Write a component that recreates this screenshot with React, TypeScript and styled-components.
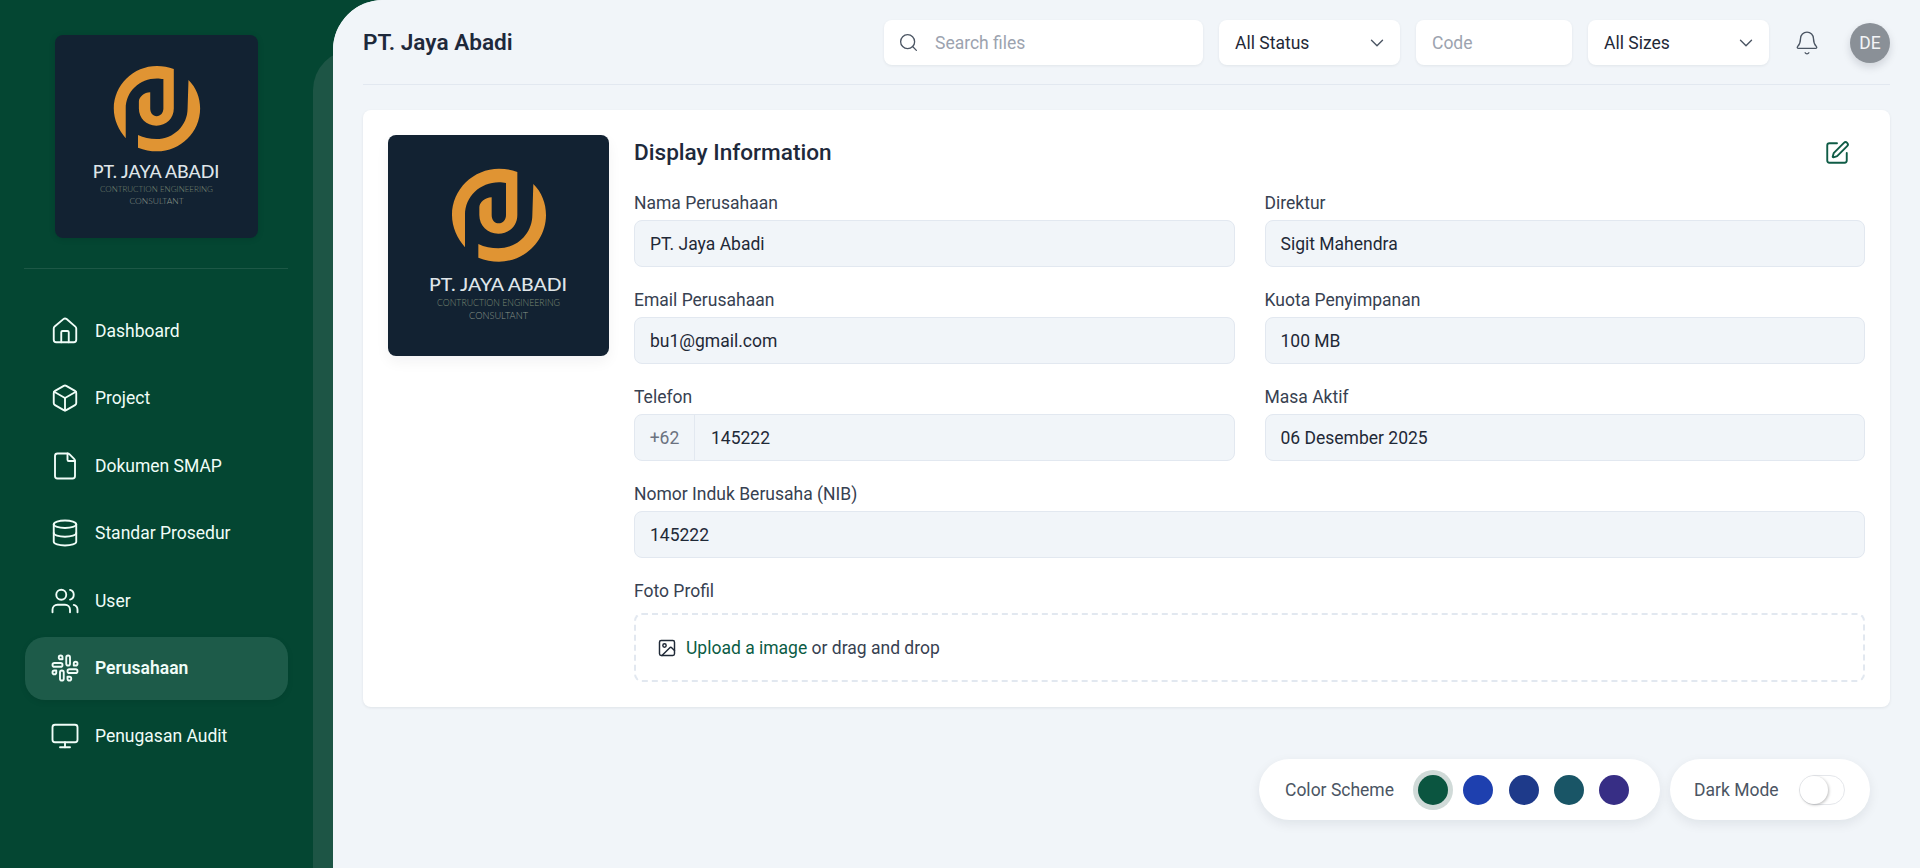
import React from "react";
import styled, { createGlobalStyle } from "styled-components";
import { Bell, Box, ChevronDown, Database, File, House, Image as ImageIcon, Monitor, Search, Slack, SquarePen, Users } from "lucide-react";

const Global = createGlobalStyle`
  html, body { margin: 0; padding: 0; height: 100%; overflow: hidden; background: #f1f5f9; }
  body { font-family: Roboto, "Liberation Sans", sans-serif; }
  * { box-sizing: border-box; }
`;

const Page = styled.div`
  display: flex;
  height: 868px;
  background: #044632;
`;

const Sidebar = styled.aside`
  width: 333px;
  flex: none;
  padding: 35px 45px 0 25px;
  display: flex;
  flex-direction: column;
`;

const LogoTile = styled.div`
  width: 203px;
  height: 203px;
  margin-left: 30px;
  border-radius: 8px;
  overflow: hidden;
  box-shadow: 0 1px 6px rgba(0, 0, 0, 0.12);
  svg { display: block; width: 100%; height: 100%; }
`;

const SideRule = styled.hr`
  width: 264px;
  height: 1px;
  border: 0;
  margin: 30px 0 30px -1px;
  background: rgba(255, 255, 255, 0.1);
`;

const Nav = styled.nav`
  display: flex;
  flex-direction: column;
  gap: 4.6px;
`;

const NavItem = styled.a<{ $active?: boolean }>`
  display: flex;
  align-items: center;
  gap: 15px;
  height: 63px;
  padding-left: 25px;
  border-radius: 20px;
  color: #f0fdf8;
  font-size: 17.5px;
  font-weight: ${(p) => (p.$active ? 600 : 400)};
  background: ${(p) => (p.$active ? "#1d5b49" : "transparent")};
  box-shadow: ${(p) => (p.$active ? "0 2px 6px rgba(0,0,0,0.08)" : "none")};
  svg { flex: none; }
`;

const Main = styled.main`
  position: relative;
  flex: 1;
  min-width: 0;
  padding: 0 30px;
  background: #f1f5f9;
  border-top-left-radius: 50px;
  &::before {
    content: "";
    position: absolute;
    left: -20px;
    top: 50px;
    bottom: 0;
    width: 70px;
    background: #1d5545;
    border-top-left-radius: 40px;
    z-index: 0;
  }
  &::after {
    content: "";
    position: absolute;
    inset: 0;
    background: #f1f5f9;
    border-top-left-radius: 50px;
    z-index: 0;
  }
  > * { position: relative; z-index: 1; }
`;

const Header = styled.header`
  height: 85px;
  display: flex;
  align-items: center;
  border-bottom: 1px solid #e2e8f0;
`;

const PageTitle = styled.h1`
  margin: 0;
  font-size: 22.6px;
  font-weight: 600;
  color: #1e293b;
`;

const Tools = styled.div`
  margin-left: auto;
  margin-top: 1px;
  display: flex;
  align-items: center;
  gap: 16px;
`;

const Control = styled.div<{ $width: number }>`
  width: ${(p) => p.$width}px;
  height: 45px;
  display: flex;
  align-items: center;
  justify-content: space-between;
  padding: 0 12px 0 16px;
  background: #fff;
  border-radius: 8px;
  box-shadow: 0 1px 3px rgba(15, 23, 42, 0.07);
  font-size: 17.5px;
  color: #1f2937;
  svg { color: #4b5563; flex: none; }
`;

const SearchBox = styled(Control)`
  justify-content: flex-start;
  gap: 16px;
  padding-left: 14px;
`;

const Placeholder = styled.span`
  color: #9ca3af;
`;

const BellButton = styled.div`
  display: flex;
  margin: 0 14px 0 9px;
  color: #4b5563;
`;

const Avatar = styled.div`
  width: 40px;
  height: 40px;
  border-radius: 50%;
  background: #8a9097;
  color: #f3f4f6;
  font-size: 17.5px;
  display: flex;
  align-items: center;
  justify-content: center;
  box-shadow: 0 4px 8px rgba(15, 23, 42, 0.15);
`;

const Card = styled.section`
  margin-top: 25px;
  padding: 25px;
  display: flex;
  gap: 25px;
  background: #fff;
  border-radius: 8px;
  box-shadow: 0 1px 3px rgba(15, 23, 42, 0.08);
`;

const CompanyImage = styled.div`
  width: 221px;
  height: 221px;
  flex: none;
  border-radius: 8px;
  overflow: hidden;
  box-shadow: 0 6px 14px rgba(15, 23, 42, 0.05);
  svg { display: block; width: 100%; height: 100%; }
`;

const Form = styled.div`
  flex: 1;
  min-width: 0;
`;

const FormHead = styled.div`
  height: 34px;
  margin-bottom: 24px;
  display: flex;
  align-items: center;
  justify-content: space-between;
  padding-right: 15px;
  color: #0f5c46;
  svg { margin-top: 2px; }
`;

const FormTitle = styled.h2`
  margin: 0;
  font-size: 22.6px;
  font-weight: 500;
  color: #1e293b;
`;

const Grid = styled.div`
  display: grid;
  grid-template-columns: 1fr 1fr;
  column-gap: 30px;
  row-gap: 23px;
`;

const Field = styled.div<{ $wide?: boolean }>`
  grid-column: ${(p) => (p.$wide ? "1 / -1" : "auto")};
`;

const Label = styled.div`
  height: 21px;
  line-height: 21px;
  margin-bottom: 6px;
  font-size: 17.5px;
  color: #374151;
`;

const Value = styled.div`
  height: 47px;
  display: flex;
  align-items: center;
  padding: 0 15px;
  background: #f1f5f9;
  border: 1px solid #e2e8f0;
  border-radius: 8px;
  font-size: 17.5px;
  color: #1f2937;
`;

const PhoneValue = styled(Value)`
  padding: 0;
`;

const Prefix = styled.span`
  width: 60px;
  height: 100%;
  display: flex;
  align-items: center;
  justify-content: center;
  border-right: 1px solid #e2e8f0;
  color: #6b7280;
  margin-right: 16px;
`;

const UploadLabel = styled(Label)`
  margin-bottom: 11px;
`;

const Upload = styled.div`
  height: 69px;
  display: flex;
  align-items: center;
  gap: 9px;
  padding-left: 21px;
  border: 2px dashed #e2e8f0;
  border-radius: 8px;
  font-size: 17.5px;
  color: #374151;
  svg { color: #1f2937; flex: none; }
`;

const UploadLink = styled.span`
  color: #0b5c45;
`;

const Floating = styled.div`
  margin-top: 52px;
  padding-right: 20px;
  display: flex;
  justify-content: flex-end;
  gap: 10px;
`;

const Pill = styled.div<{ $width: number }>`
  width: ${(p) => p.$width}px;
  height: 61px;
  display: flex;
  align-items: center;
  padding: 0 25px 0 26px;
  border-radius: 31px;
  background: #fff;
  box-shadow: 0 4px 12px rgba(15, 23, 42, 0.08);
  font-size: 17.5px;
  color: #4b5563;
`;

const DarkPill = styled(Pill)`
  padding-left: 24px;
`;

const Swatches = styled.div`
  display: flex;
  gap: 15.3px;
  margin-left: 24px;
`;

const Swatch = styled.div<{ $color: string; $selected?: boolean }>`
  width: 30px;
  height: 30px;
  border-radius: 50%;
  background: ${(p) => p.$color};
  box-shadow: ${(p) => (p.$selected ? "0 0 0 5px #d0dad8" : "none")};
`;

const Toggle = styled.div`
  width: 46px;
  height: 30px;
  margin-left: auto;
  border: 1px solid #e5e7eb;
  border-radius: 15px;
  background: #fff;
`;

const Knob = styled.div`
  width: 28px;
  height: 28px;
  border-radius: 50%;
  background: #fff;
  box-shadow: 1px 1px 3px rgba(0, 0, 0, 0.25);
`;

const Logo = () => (
  <svg viewBox="0 0 221 221" role="img" aria-label="PT. Jaya Abadi logo">
    <rect width="221" height="221" fill="#122232" />
    <g transform="translate(42 25) scale(0.33333)" fill="#e09433">
      <path d="M105 262 C82 235 66 202 66 165 C66 88 130 26 207 26 C226 26 245 29 262 36 L262 165 C262 197 238 221 205 221 C172 221 148 197 148 165 L148 142 C148 128 165 112 185 112 L185 165 C185 179 193 190 206 190 C219 190 228 179 228 165 L228 69 C222 68 214 67 207 67 C150 67 105 110 105 165 Z" />
      <path d="M310 72 C335 96 348 130 348 165 C348 242 284 305 207 305 C186 305 165 301 145 293 L145 252 C163 261 184 265 205 265 C262 265 307 220 307 165 Z" />
    </g>
    <text x="110" y="155.5" textAnchor="middle" textLength="138" lengthAdjust="spacingAndGlyphs" fontFamily="Lato, sans-serif" fontSize="18" fontWeight="500" fill="#dfe5e9">PT. JAYA ABADI</text>
    <text x="110.5" y="171" textAnchor="middle" textLength="123" lengthAdjust="spacingAndGlyphs" fontFamily="Lato, sans-serif" fontSize="9" fontWeight="300" fill="#7c8a74">CONTRUCTION ENGINEERING</text>
    <text x="110.5" y="184" textAnchor="middle" textLength="59" lengthAdjust="spacingAndGlyphs" fontFamily="Lato, sans-serif" fontSize="9" fontWeight="300" fill="#8c978a">CONSULTANT</text>
  </svg>
);

const navItems = [
  { label: "Dashboard", icon: House },
  { label: "Project", icon: Box },
  { label: "Dokumen SMAP", icon: File },
  { label: "Standar Prosedur", icon: Database },
  { label: "User", icon: Users },
  { label: "Perusahaan", icon: Slack, active: true },
  { label: "Penugasan Audit", icon: Monitor },
];

const fields = [
  ["Nama Perusahaan", "PT. Jaya Abadi"],
  ["Direktur", "Sigit Mahendra"],
  ["Email Perusahaan", "bu1@gmail.com"],
  ["Kuota Penyimpanan", "100 MB"],
];

const swatches = ["#0b5540", "#1e40af", "#1e3a8a", "#195566", "#372e85"];

export default function App() {
  return (
    <Page>
      <Global />
      <Sidebar>
        <LogoTile><Logo /></LogoTile>
        <SideRule />
        <Nav>
          {navItems.map(({ label, icon: Icon, active }) => (
            <NavItem key={label} $active={active}>
              <Icon size={30} strokeWidth={1.5} />
              {label}
            </NavItem>
          ))}
        </Nav>
      </Sidebar>
      <Main>
        <Header>
          <PageTitle>PT. Jaya Abadi</PageTitle>
          <Tools>
            <SearchBox $width={319}>
              <Search size={21} strokeWidth={1.5} />
              <Placeholder>Search files</Placeholder>
            </SearchBox>
            <Control $width={181}>All Status<ChevronDown size={22} strokeWidth={1.5} /></Control>
            <Control $width={156}><Placeholder>Code</Placeholder></Control>
            <Control $width={181}>All Sizes<ChevronDown size={22} strokeWidth={1.5} /></Control>
            <BellButton><Bell size={26} strokeWidth={1.25} /></BellButton>
            <Avatar>DE</Avatar>
          </Tools>
        </Header>
        <Card>
          <CompanyImage><Logo /></CompanyImage>
          <Form>
            <FormHead>
              <FormTitle>Display Information</FormTitle>
              <SquarePen size={26} strokeWidth={1.75} />
            </FormHead>
            <Grid>
              {fields.map(([label, value]) => (
                <Field key={label}>
                  <Label>{label}</Label>
                  <Value>{value}</Value>
                </Field>
              ))}
              <Field>
                <Label>Telefon</Label>
                <PhoneValue><Prefix>+62</Prefix>145222</PhoneValue>
              </Field>
              <Field>
                <Label>Masa Aktif</Label>
                <Value>06 Desember 2025</Value>
              </Field>
              <Field $wide>
                <Label>Nomor Induk Berusaha (NIB)</Label>
                <Value>145222</Value>
              </Field>
              <Field $wide>
                <UploadLabel>Foto Profil</UploadLabel>
                <Upload>
                  <ImageIcon size={20} strokeWidth={1.75} />
                  <span><UploadLink>Upload a image</UploadLink> or drag and drop</span>
                </Upload>
              </Field>
            </Grid>
          </Form>
        </Card>
        <Floating>
          <Pill $width={401}>
            Color Scheme
            <Swatches>
              {swatches.map((c, i) => <Swatch key={c} $color={c} $selected={i === 0} />)}
            </Swatches>
          </Pill>
          <DarkPill $width={200}>
            Dark Mode
            <Toggle><Knob /></Toggle>
          </DarkPill>
        </Floating>
      </Main>
    </Page>
  );
}
